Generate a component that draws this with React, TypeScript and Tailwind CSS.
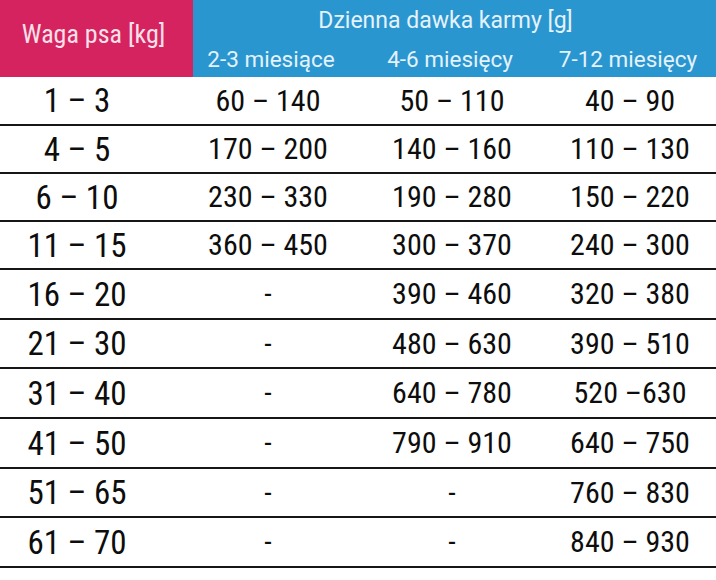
import React from "react";

type Row = { w: string; a: string; b: string; c: string; h: string };

const rows: Row[] = [
  { w: "1 – 3", a: "60 – 140", b: "50 – 110", c: "40 – 90", h: "h-[49px]" },
  { w: "4 – 5", a: "170 – 200", b: "140 – 160", c: "110 – 130", h: "h-[48px]" },
  { w: "6 – 10", a: "230 – 330", b: "190 – 280", c: "150 – 220", h: "h-[48px]" },
  { w: "11 – 15", a: "360 – 450", b: "300 – 370", c: "240 – 300", h: "h-[48px]" },
  { w: "16 – 20", a: "-", b: "390 – 460", c: "320 – 380", h: "h-[50px]" },
  { w: "21 – 30", a: "-", b: "480 – 630", c: "390 – 510", h: "h-[49px]" },
  { w: "31 – 40", a: "-", b: "640 – 780", c: "520 –630", h: "h-[50px]" },
  { w: "41 – 50", a: "-", b: "790 – 910", c: "640 – 750", h: "h-[50px]" },
  { w: "51 – 65", a: "-", b: "-", c: "760 – 830", h: "h-[49px]" },
  { w: "61 – 70", a: "-", b: "-", c: "840 – 930", h: "h-[50px]" },
];

const cond = "font-['Roboto_Condensed',Roboto,sans-serif]";

export default function App() {
  return (
    <div className="w-[716px] h-[580px] bg-white overflow-hidden font-['Roboto',sans-serif]">
      <div className="flex h-[77px]">
        <div className={`w-[193px] bg-[#d4235f] flex items-center justify-center pb-[8px] pr-[6px] text-[26px] text-[#fbe0ea] ${cond}`}>
          Waga psa [kg]
        </div>
        <div className="flex-1 bg-[#2a96d0] flex flex-col text-[#e4f2fb]">
          <div className="h-[42px] flex items-center justify-center pr-[18px] text-[23px]">
            Dzienna dawka karmy [g]
          </div>
          <div className="flex-1 grid grid-cols-[156px_202px_154px] text-[22.5px] items-center">
            <div className="text-center">2-3 miesiące</div>
            <div className="text-center">4-6 miesięcy</div>
            <div className="text-center">7-12 miesięcy</div>
          </div>
        </div>
      </div>
      {rows.map((r, i) => (
        <div
          key={i}
          className={`grid grid-cols-[154px_228px_140px_194px] items-center border-b-2 border-[#161616] text-[#0d0d0d] ${r.h} ${cond}`}
        >
          <div className="text-center text-[33px] leading-none">{r.w}</div>
          <div className="text-center text-[30px] leading-none">{r.a}</div>
          <div className="text-center text-[30px] leading-none">{r.b}</div>
          <div className="text-center text-[30px] leading-none pl-[22px]">{r.c}</div>
        </div>
      ))}
    </div>
  );
}
